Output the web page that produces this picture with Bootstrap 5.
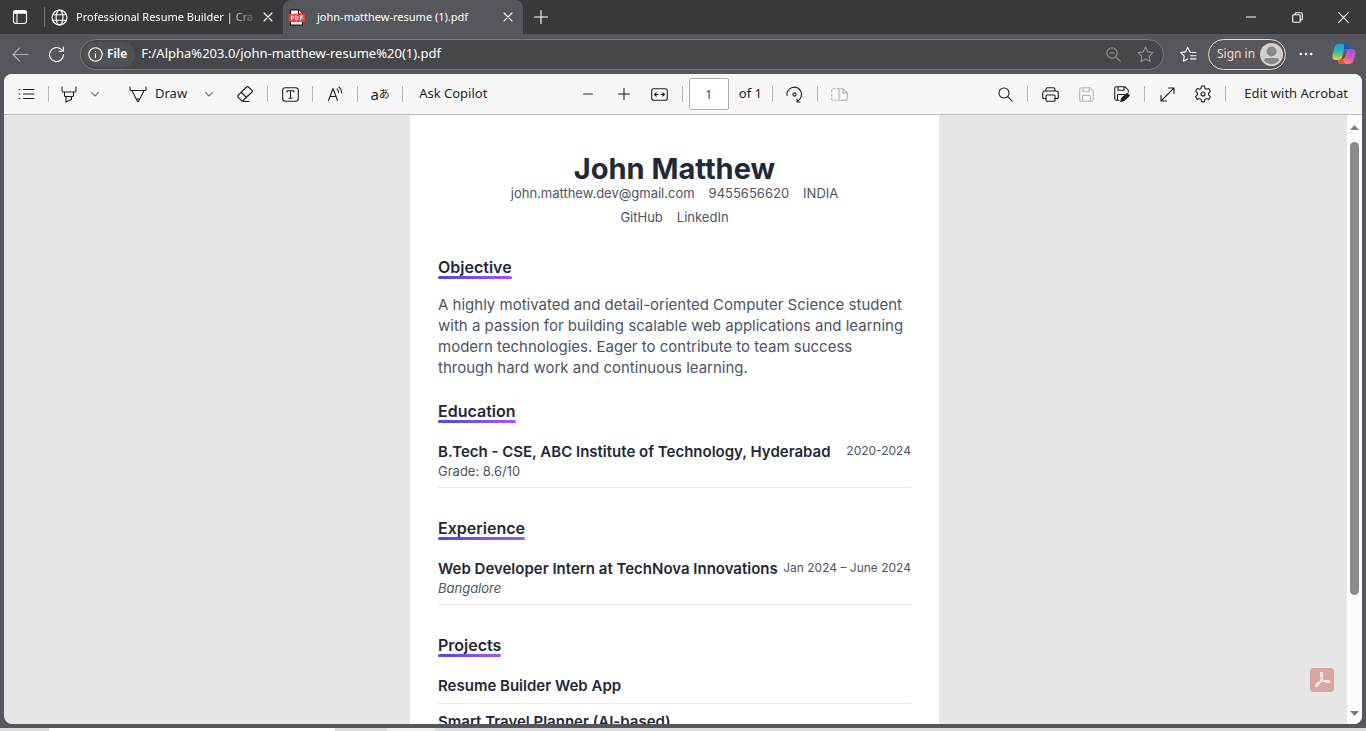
<!DOCTYPE html>
<html lang="en">
<head>
<meta charset="utf-8">
<meta name="viewport" content="width=device-width, initial-scale=1">
<title>john-matthew-resume (1).pdf</title>
<link href="https://cdn.jsdelivr.net/npm/bootstrap@5.3.0/dist/css/bootstrap.min.css" rel="stylesheet">
<style>
  :root { --ui: "Noto Sans", "Noto Sans CJK JP", sans-serif; --doc: Inter, "Open Sans", sans-serif; }
  body { font-family: var(--ui); font-size: 13px; background: #56575c; color: #1f1f1f; }
  svg { display: block; fill: none; stroke: currentColor; stroke-width: 1.1; stroke-linecap: round; stroke-linejoin: round; flex: none; }
  button { background: none; border: 0; padding: 0; color: inherit; display: flex; align-items: center; justify-content: center; white-space: nowrap; }

  /* Title bar and tabs */
  .titlebar { height: 34px; background: #38393d; color: #fff; }
  .tab-actions { width: 40px; }
  .tab-sep { width: 1px; height: 20px; background: #77787b; margin-left: 4px; }
  .tab-item { width: 238px; padding: 0 5px 0 6px; }
  .tab-item.current { width: 240px; background: #56575c; border-radius: 8px 8px 0 0; }
  .tab-title { min-width: 0; line-height: 20px; font-size: 11px; color: #fff; text-decoration: none; white-space: nowrap; }
  .fade-out { -webkit-mask-image: linear-gradient(90deg, #000 150px, transparent 184px); mask-image: linear-gradient(90deg, #000 150px, transparent 184px); }
  .tab-close { width: 20px; height: 20px; }
  .win-btn { width: 46px; height: 34px; }

  /* Address bar */
  .address-row { height: 40px; color: #fff; gap: 2px; padding: 0 4px 0 2px; }
  .nav-btn { width: 36px; height: 30px; }
  .omnibox { height: 31px; border: 1px solid #797a7e; border-radius: 16px; background: #46474b; padding: 0 2px; margin: 0 4px; }
  .file-chip { height: 25px; border-radius: 13px; background: #515256; padding: 0 8px 0 5px; font-size: 12px; font-weight: 600; }
  .omnibox input { background: none; border: 0; outline: 0; color: #fff; min-width: 0; padding: 0 6px; }
  .omni-btn { width: 32px; color: #909195; }
  .sign-in { height: 31px; width: 78px; border: 1px solid #f6d8c3; border-radius: 16px; color: #f9d9c6; font-size: 12px; padding: 0 2px 0 8px; justify-content: space-between; }

  /* Viewer */
  .viewer { background: #e6e6e6; border-radius: 8px; margin: 0 4px 4px; overflow: hidden; min-height: 0; }
  .tools { height: 41px; background: #f7f7f7; border-bottom: 1px solid #bdbdbd; }
  .tools-end { padding-right: 14px; }
  .tool { width: 36px; height: 32px; }
  .tool-split { width: 32px; }
  .tool-drop { width: 20px; color: #777; }
  .tool-text { height: 32px; }
  .tool-acrobat { padding-left: 14px; }
  .tool-off { color: #b5b5b5; }
  .tool-min { color: #8f8f8f; }
  .sep { width: 1px; height: 16px; margin: 0 4px; background: #b8b8b8; flex: none; }
  .page-no { width: 40px; height: 32px; border: 1px solid #b0b0b0; border-radius: 2px; text-align: center; color: #0b5cad; background: #fff; padding: 0; margin-left: 2px; }
  .page-total { padding: 0 6px 0 10px; }
  .glyph-tool { font-size: 15px; }
  .glyph-tool small { font-size: 11px; }

  /* Resume sheet */
  .canvas { overflow: hidden; min-height: 0; }
  .desk-area { padding-right: 2px; }
  .sheet { width: 529px; max-width: 100%; background: #fff; padding: 42px 28px; font-family: var(--doc); color: #4b5563; }
  .sheet h1 { font-size: 29px; line-height: 24px; font-weight: 700; color: #1f2937; margin: 0; }
  .contact { font-size: 13px; line-height: 24px; gap: 14px; }
  .contact a { color: inherit; text-decoration: none; }
  .sheet section { margin-bottom: 23px; display: flow-root; }
  .sheet h2 { display: table; font-size: 16px; line-height: 20px; font-weight: 600; color: #1f2937; margin: 0 0 18px; position: relative; padding-bottom: 2px; }
  .sheet h2::after { content: ""; position: absolute; left: 0; right: 0; bottom: 0; height: 3px; border-radius: 2px; background: linear-gradient(90deg, #4f46e5, #a855f7); }
  .sheet h2.tight { margin-bottom: 15px; }
  .sheet p { font-size: 15px; line-height: 21px; margin: 0; }
  .entry { border-bottom: 1px solid #e5e7eb; padding-bottom: 7px; margin-bottom: 7px; }
  .entry h3 { font-size: 15px; line-height: 21px; font-weight: 600; color: #1f2937; margin: 0; white-space: nowrap; }
  .entry .when { font-size: 12px; line-height: 20px; white-space: nowrap; }
  .entry .note { font-size: 13px; line-height: 18px; }
  .scroller { width: 15px; background: #fcfcfc; padding: 10px 0 8px; }
  .thumb { width: 9px; height: 453px; flex: 0 1 auto; background: #8b8b8b; border-radius: 5px; margin-top: 12px; }
  .arrow { width: 9px; height: 5px; background: #7d7d7d; flex: none; }
  .arrow-up { clip-path: polygon(50% 0, 100% 100%, 0 100%); }
  .arrow-down { clip-path: polygon(0 0, 100% 0, 50% 100%); }
  .acrobat { position: absolute; right: 28px; bottom: 32px; width: 24px; height: 24px; border-radius: 4px; background: #dba5a1; color: #fff; }
  .desk { height: 3px; background: #dcdce0; }
  .desk-a { width: 286px; margin-left: 49px; background: #fff; }
  .desk-b { width: 48px; margin-left: 52px; background: #f0f0f0; }
</style>
</head>
<body class="vh-100 d-flex flex-column overflow-hidden">

<header class="titlebar d-flex align-items-center flex-shrink-0">
  <button class="tab-actions" aria-label="Tab actions"><svg width="16" height="16" viewBox="0 0 16 16"><rect x="1.5" y="1.5" width="13" height="13" rx="2.5"/><path d="M1.5 4.3h13M5 5v9" /><path d="M2 3h12" stroke-width="2"/></svg></button>
  <span class="tab-sep"></span>
  <div class="tab-item d-flex align-items-center">
    <svg width="17" height="17" viewBox="0 0 16 16"><circle cx="8" cy="8" r="7"/><ellipse cx="8" cy="8" rx="3.2" ry="7"/><path d="M1.7 5.4h12.6M1.7 10.6h12.6"/></svg>
    <a href="#" class="tab-title fade-out flex-grow-1 ms-2">Professional Resume Builder | Cra</a>
    <button class="tab-close ms-1" aria-label="Close tab"><svg width="10" height="10" viewBox="0 0 10 10"><path d="M1 1l8 8M9 1l-8 8"/></svg></button>
  </div>
  <div class="tab-item current d-flex align-items-center h-100">
    <svg width="16" height="17" viewBox="0 0 16 17" stroke="none"><path d="M1.5 1h8l4 4v11h-12z" fill="#fff" stroke="#111"/><path d="M9.500 1v4h4" stroke="#111" fill="#fff"/><rect x="0" y="5" width="16" height="8" rx="1" fill="#f23b3b" stroke="none"/><g stroke="#fff" stroke-width="1"><path d="M2.500 11V7h1.300a1 1 0 010 2.300H2.500M6.700 7v4h.8a1.700 1.700 0 001.500-2 1.700 1.700 0 00-1.500-2zM11.500 11V7h2.400M11.500 9h2"/></g></svg>
    <a href="#" class="tab-title flex-grow-1 ms-2 ps-1">john-matthew-resume (1).pdf</a>
    <button class="tab-close" aria-label="Close tab"><svg width="10" height="10" viewBox="0 0 10 10"><path d="M1 1l8 8M9 1l-8 8"/></svg></button>
  </div>
  <button class="nav-btn" aria-label="New tab"><svg width="14" height="14" viewBox="0 0 14 14"><path d="M7 .5v13M.5 7h13"/></svg></button>
  <div class="d-flex ms-auto">
    <button class="win-btn" aria-label="Minimize"><svg width="10" height="10" viewBox="0 0 10 10"><path d="M0 5h10"/></svg></button>
    <button class="win-btn" aria-label="Restore"><svg width="11" height="11" viewBox="0 0 11 11"><rect x=".7" y="2.700" width="7.500" height="7.500" rx="1"/><path d="M3 2.500V2A1.300 1.300 0 014.300.7H9A1.300 1.300 0 0110.300 2v4.700A1.300 1.300 0 019 8h-.5"/></svg></button>
    <button class="win-btn" aria-label="Close"><svg width="11" height="11" viewBox="0 0 11 11"><path d="M.7.7l9.600 9.600M10.300.7L.7 10.300"/></svg></button>
  </div>
</header>

<nav class="address-row d-flex align-items-center flex-shrink-0">
  <div class="d-flex">
    <button class="nav-btn text-white-50" aria-label="Back"><svg width="17" height="15" viewBox="0 0 17 15"><path d="M16 7.500H1M7.500 1L1 7.500 7.500 14"/></svg></button>
    <button class="nav-btn" aria-label="Refresh"><svg width="17" height="17" viewBox="0 0 17 17"><path d="M15.500 8.500A7 7 0 1 1 13 3.200L15 5M15.300 1v4.300H11"/></svg></button>
  </div>
  <div class="omnibox d-flex align-items-center flex-grow-1">
    <div class="file-chip d-flex align-items-center gap-1"><svg width="15" height="15" viewBox="0 0 15 15"><circle cx="7.500" cy="7.500" r="6.700"/><path d="M7.500 6.800v4M7.500 4.300v.2"/></svg><span>File</span></div>
    <input class="flex-grow-1" type="text" aria-label="Address" value="F:/Alpha%203.0/john-matthew-resume%20(1).pdf">
    <button class="omni-btn" aria-label="Zoom"><svg width="15" height="15" viewBox="0 0 15 15"><circle cx="6" cy="6" r="5.200"/><path d="M10 10l4.300 4.300M3.500 6h5"/></svg></button>
    <button class="omni-btn" aria-label="Add to favorites"><svg width="17" height="17" viewBox="0 0 17 17"><path d="M8.500 1l2.300 4.900 5.200.7-3.800 3.700.9 5.300-4.600-2.500-4.600 2.500.9-5.300L1 6.600l5.200-.7z"/></svg></button>
  </div>
  <button class="nav-btn" aria-label="Favorites"><svg width="17" height="17" viewBox="0 0 17 17"><path d="M10.300 5.900H10L7.700 1.200 5.500 5.900l-4.800.7 3.600 3.600-.9 5 4.200-2.200M10.500 6.500H16M10.500 9.700H16M10.500 12.900H16"/></svg></button>
  <button class="sign-in flex-shrink-0"><span>Sign in</span><svg width="23" height="23" viewBox="0 0 23 23"><g stroke="none"><circle cx="11.500" cy="11.500" r="11.500" fill="#d3d1ce"/><circle cx="11.500" cy="8.500" r="5" fill="#8c8885"/><path d="M4 17.500c0-2 2-2.500 3-2.500h9c1 0 3 .5 3 2.500-4 5-11 5-15 0z" fill="#8c8885"/></g></svg></button>
  <button class="nav-btn" aria-label="Settings and more"><svg width="14" height="4" viewBox="0 0 14 4"><g stroke="none" fill="#fff"><circle cx="1.800" cy="2" r="1.300"/><circle cx="7" cy="2" r="1.300"/><circle cx="12.200" cy="2" r="1.300"/></g></svg></button>
  <button class="nav-btn" aria-label="Copilot"><svg width="24" height="22" viewBox="0 0 24 22"><defs><linearGradient id="ca" x1="0" y1="0" x2="0" y2="1"><stop offset="0" stop-color="#199be8"/><stop offset=".5" stop-color="#31b9a0"/><stop offset="1" stop-color="#e4d638"/></linearGradient><linearGradient id="cb" x1="0" y1="1" x2=".6" y2="0"><stop offset="0" stop-color="#ffa45a"/><stop offset=".5" stop-color="#ee5d9a"/><stop offset="1" stop-color="#9b55ef"/></linearGradient></defs><g stroke="none"><path d="M7 1h8c2 0 2.500 1 3 3l.6 2H15c-2 0-3 1-3.500 3L10 14c-.5 2-1.500 3-3.500 3H4c-3 0-4-2-3.500-5l1.800-7C3 2 4.500 1 7 1z" fill="url(#ca)"/><path d="M12 1h3c2 0 2.500 1 3 3l.6 2H15c-1.500 0-2.500 1-3 2z" fill="#1d53c8"/><path d="M17 21H9c-2 0-2.500-1-3-4h1c2 0 3-1 3.500-3L12 9c.5-2 1.500-3 3.500-3H20c3 0 4 2 3.500 5l-1.800 6c-.7 3-2.200 4-4.700 4z" fill="url(#cb)"/><path d="M6 17h1.500c1.500 0 2.500-1 3-3l1.500 4c.4 1.500 1 2.500 2 3H9c-2 0-2.500-1-3-4z" fill="#f0532f"/><path d="M12.700 7.500L10.200 15.500l1 .8c.8-.4 1.300-1 1.600-2L14.600 9c.3-1 .8-1.500 1.400-1.800z" fill="#56575c"/></g></svg></button>
</nav>

<main class="viewer d-flex flex-column flex-grow-1 position-relative">
  <div class="tools flex-shrink-0">
    <div class="row g-0 h-100 align-items-center flex-nowrap">
      <div class="col-5 d-flex align-items-center ps-1">
        <button class="tool" aria-label="Contents"><svg width="17" height="12" viewBox="0 0 17 12"><path d="M5.500 1.500H16M5.500 6H16M5.500 10.500H16M1 1.500h.8M1 6h.8M1 10.500h.8" /></svg></button>
        <span class="sep"></span>
        <button class="tool tool-split" aria-label="Highlight"><svg width="16" height="17" viewBox="0 0 16 17"><path d="M1 1v3.500c0 1 .5 1.500 1.500 1.500h11c1 0 1.500-.5 1.500-1.500V1M3.500 6v3.500c0 .7.400 1 1 1h7c.6 0 1-.3 1-1V6M5 10.500V16l5.500-2.500v-3"/></svg></button>
        <button class="tool tool-drop" aria-label="Highlight colors"><svg width="8" height="5" viewBox="0 0 8 5"><path d="M.5.5L4 4 7.500.5"/></svg></button>
        <button class="tool-text ms-3 px-2 gap-2"><svg width="18" height="17" viewBox="0 0 18 17"><path d="M1 1v2.500c0 .7.400 1 1 1h14c.6 0 1-.3 1-1V1M3 4.500L8.500 15.500h1L15 4.500M7.500 13h3"/></svg><span>Draw</span></button>
        <button class="tool tool-drop ms-1" aria-label="Draw options"><svg width="8" height="5" viewBox="0 0 8 5"><path d="M.5.5L4 4 7.500.5"/></svg></button>
        <button class="tool ms-2" aria-label="Erase"><svg width="18" height="18" viewBox="0 0 18 18"><path d="M10.500 2L2 10.500c-.6.600-.6 1 0 1.600L5.500 15.500c.6.600 1 .6 1.600 0L16 7c.6-.6.600-1 0-1.600L12.500 2c-.7-.6-1.300-.6-2 0zM5.500 7.500l5 5M7 16.500h6"/></svg></button>
        <span class="sep"></span>
        <button class="tool" aria-label="Add text"><svg width="17" height="15" viewBox="0 0 17 15"><rect x=".7" y=".7" width="15.600" height="13.600" rx="2.500"/><path d="M5 5V3.700h7V5M8.500 3.700v7.600M7 11.300h3"/></svg></button>
        <span class="sep"></span>
        <button class="tool" aria-label="Read aloud"><svg width="17" height="16" viewBox="0 0 17 16"><path d="M1.500 14.500L6 2.500l4.500 12M3 10.500h6M10 3c1 .8 1.500 2 1.500 3.500M12 1c1.700 1.400 2.700 3.500 2.700 6"/></svg></button>
        <span class="sep"></span>
        <button class="tool glyph-tool" aria-label="Translate"><span>a</span><small>あ</small></button>
        <span class="sep"></span>
        <button class="tool-text px-2 ms-1">Ask Copilot</button>
      </div>
      <div class="col-auto d-flex align-items-center">
        <button class="tool tool-min" aria-label="Zoom out"><svg width="10" height="10" viewBox="0 0 10 10"><path d="M1 5h8" stroke-width="2"/></svg></button>
        <button class="tool" aria-label="Zoom in"><svg width="12" height="12" viewBox="0 0 12 12"><path d="M6 .5v11M.5 6h11"/></svg></button>
        <button class="tool" aria-label="Fit to width"><svg width="17" height="13" viewBox="0 0 17 13"><rect x=".7" y=".7" width="15.600" height="11.600" rx="2"/><path d="M3.500 6.500H7M10 6.500h3.500M5.300 4.800L3.500 6.500l1.800 1.700M11.700 4.800l1.800 1.700-1.800 1.700"/></svg></button>
        <span class="sep"></span>
        <input class="page-no" type="text" aria-label="Page number" value="1">
        <span class="page-total">of 1</span>
        <span class="sep"></span>
        <button class="tool" aria-label="Rotate"><svg width="17" height="17" viewBox="0 0 17 17"><path d="M1 9.500A7.300 7.300 0 1 1 12 14.700M14 16h-3v-3"/><circle cx="8.500" cy="8.500" r="1.600"/></svg></button>
        <span class="sep"></span>
        <button class="tool tool-off" aria-label="Page view"><svg width="17" height="13" viewBox="0 0 17 13"><path d="M8 .7v11.600h6.300c1 0 2-.7 2-2V5L12 .7H8zM12 .7V5h4.300"/><path d="M8 .7H2.500C1.300.7.7 1.500.7 2.500v8c0 1 .6 1.800 1.800 1.800H8" stroke-dasharray="2 2"/></svg></button>
      </div>
      <div class="col d-flex align-items-center justify-content-end tools-end">
        <button class="tool" aria-label="Find"><svg width="15" height="15" viewBox="0 0 15 15"><circle cx="6" cy="6" r="5"/><path d="M9.700 9.700l4.500 4.500"/></svg></button>
        <span class="sep"></span>
        <button class="tool" aria-label="Print"><svg width="17" height="15" viewBox="0 0 17 15"><path d="M4 4V2.500C4 1.500 4.500.7 5.500.7h6c1 0 1.500.8 1.500 1.800V4M4 11.500H2c-.8 0-1.300-.5-1.300-1.300V6.500C.7 5 1.500 4 3 4h11c1.500 0 2.300 1 2.300 2.500v3.700c0 .8-.5 1.300-1.300 1.300h-2"/><rect x="4" y="8" width="9" height="6.300" rx="1"/></svg></button>
        <button class="tool tool-off" aria-label="Save"><svg width="15" height="15" viewBox="0 0 15 15"><path d="M2.500.7h8.300l3.500 3.500v8.300c0 1-.8 1.800-1.800 1.800h-10c-1 0-1.800-.8-1.800-1.800v-10c0-1 .8-1.800 1.800-1.800zM4 .7v3.500h6V.7M3.500 14V8.500h8V14"/></svg></button>
        <button class="tool" aria-label="Save as"><svg width="16" height="16" viewBox="0 0 16 16"><path d="M5 14.300H2.500c-1 0-1.800-.8-1.800-1.800v-10C.7 1.500 1.500.7 2.500.7h8.300l3.500 3.500v2M4 .7v3.500h6V.7M3.500 14V8.500h7"/><path d="M7.500 12.500L13 7.500l2.300 2-5.300 5-3.200 1z" fill="currentColor"/></svg></button>
        <span class="sep"></span>
        <button class="tool" aria-label="Full screen"><svg width="15" height="15" viewBox="0 0 15 15"><path d="M1 14L14 1M8.500 1H14v5.500M1 8.500V14h5.500"/></svg></button>
        <button class="tool" aria-label="Settings"><svg width="18" height="18" viewBox="0 0 18 18"><path d="M7.600 1h2.800l.6 2.500 1.300.8 2.500-.8 1.600 2.700-1.900 1.900v1.700l1.900 1.900-1.600 2.700-2.500-.8-1.300.8-.6 2.500H7.600L7 14.400l-1.300-.8-2.500.8-1.600-2.700 1.900-1.900V8.100L1.600 6.200l1.600-2.700 2.500.8L7 3.500z"/><circle cx="9" cy="9" r="2"/></svg></button>
        <span class="sep"></span>
        <button class="tool-text tool-acrobat">Edit with Acrobat</button>
      </div>
    </div>
  </div>

  <div class="d-flex flex-grow-1 canvas">
    <div class="flex-grow-1 canvas desk-area d-flex justify-content-center">
      <article class="sheet">
        <h1 class="text-center">John Matthew</h1>
        <div class="contact d-flex justify-content-center">
          <span>john.matthew.dev@gmail.com</span><span>9455656620</span><span>INDIA</span>
        </div>
        <div class="contact d-flex justify-content-center mb-4 pb-1">
          <a href="#">GitHub</a><a href="#">LinkedIn</a>
        </div>
        <section>
          <h2 class="tight">Objective</h2>
          <p>A highly motivated and detail-oriented Computer Science student with a passion for building scalable web applications and learning modern technologies. Eager to contribute to team success<br>through hard work and continuous learning.</p>
        </section>
        <section>
          <h2>Education</h2>
          <div class="entry">
            <div class="d-flex justify-content-between"><h3>B.Tech - CSE, ABC Institute of Technology, Hyderabad</h3><span class="when">2020-2024</span></div>
            <div class="note">Grade: 8.6/10</div>
          </div>
        </section>
        <section>
          <h2>Experience</h2>
          <div class="entry">
            <div class="d-flex justify-content-between"><h3>Web Developer Intern at TechNova Innovations</h3><span class="when">Jan 2024 – June 2024</span></div>
            <div class="note fst-italic">Bangalore</div>
          </div>
        </section>
        <section>
          <h2>Projects</h2>
          <div class="entry"><h3>Resume Builder Web App</h3></div>
          <div class="entry"><h3>Smart Travel Planner (AI-based)</h3></div>
        </section>
      </article>
    </div>
    <div class="scroller d-flex flex-column align-items-center">
      <span class="arrow arrow-up"></span>
      <span class="thumb"></span>
      <span class="arrow arrow-down mt-auto"></span>
    </div>
  </div>
  <button class="acrobat" aria-label="Open in Acrobat"><svg width="18" height="18" viewBox="0 0 18 18"><path d="M8.500 1.500c-2 0-.8 4.500 1 7s6.500 3.800 7 2.200c.5-1.700-4-1.500-7.500-.5s-7 3-6.300 4.800c.9 1.700 4-2.800 5.300-6s2.200-7.500.5-7.500z"/></svg></button>
</main>

<div class="desk d-flex flex-shrink-0"><span class="desk-a"></span><span class="desk-b"></span></div>

<script src="https://cdn.jsdelivr.net/npm/bootstrap@5.3.0/dist/js/bootstrap.bundle.min.js"></script>
</body>
</html>
